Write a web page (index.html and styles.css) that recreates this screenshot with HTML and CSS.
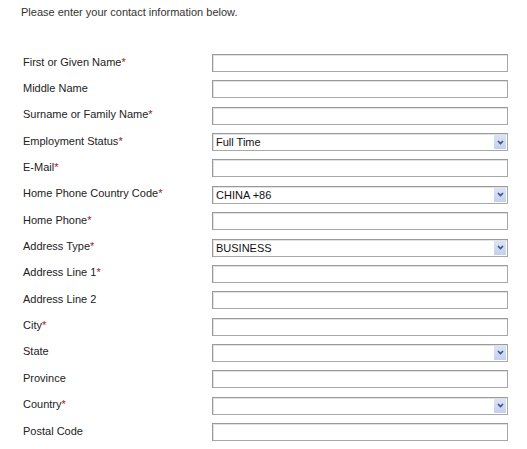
FILE: index.html
```html
<!DOCTYPE html>
<html>
<head>
<meta charset="utf-8">
<link rel="stylesheet" href="styles.css">
</head>
<body>
<div class="page">
  <p class="intro">Please enter your contact information below.</p>
  <div class="form">
    <div class="label">First or Given Name<span class="req">*</span></div>
    <div class="field"><div class="input"></div></div>
    <div class="label">Middle Name</div>
    <div class="field"><div class="input"></div></div>
    <div class="label">Surname or Family Name<span class="req">*</span></div>
    <div class="field"><div class="input"></div></div>
    <div class="label">Employment Status<span class="req">*</span></div>
    <div class="field"><div class="input select"><span class="value">Full Time</span><span class="btn"><svg width="7" height="5" viewBox="0 0 7 5"><path d="M1 1 L3.5 3.5 L6 1" fill="none" stroke="#3a4f86" stroke-width="1.6"/></svg></span></div></div>
    <div class="label">E-Mail<span class="req">*</span></div>
    <div class="field"><div class="input"></div></div>
    <div class="label">Home Phone Country Code<span class="req">*</span></div>
    <div class="field"><div class="input select"><span class="value">CHINA +86</span><span class="btn"><svg width="7" height="5" viewBox="0 0 7 5"><path d="M1 1 L3.5 3.5 L6 1" fill="none" stroke="#3a4f86" stroke-width="1.6"/></svg></span></div></div>
    <div class="label">Home Phone<span class="req">*</span></div>
    <div class="field"><div class="input"></div></div>
    <div class="label">Address Type<span class="req">*</span></div>
    <div class="field"><div class="input select"><span class="value">BUSINESS</span><span class="btn"><svg width="7" height="5" viewBox="0 0 7 5"><path d="M1 1 L3.5 3.5 L6 1" fill="none" stroke="#3a4f86" stroke-width="1.6"/></svg></span></div></div>
    <div class="label">Address Line 1<span class="req">*</span></div>
    <div class="field"><div class="input"></div></div>
    <div class="label">Address Line 2</div>
    <div class="field"><div class="input"></div></div>
    <div class="label">City<span class="req">*</span></div>
    <div class="field"><div class="input"></div></div>
    <div class="label">State</div>
    <div class="field"><div class="input select"><span class="value"></span><span class="btn"><svg width="7" height="5" viewBox="0 0 7 5"><path d="M1 1 L3.5 3.5 L6 1" fill="none" stroke="#3a4f86" stroke-width="1.6"/></svg></span></div></div>
    <div class="label">Province</div>
    <div class="field"><div class="input"></div></div>
    <div class="label">Country<span class="req">*</span></div>
    <div class="field"><div class="input select"><span class="value"></span><span class="btn"><svg width="7" height="5" viewBox="0 0 7 5"><path d="M1 1 L3.5 3.5 L6 1" fill="none" stroke="#3a4f86" stroke-width="1.6"/></svg></span></div></div>
    <div class="label">Postal Code</div>
    <div class="field"><div class="input"></div></div>
  </div>
</div>
</body>
</html>
```
FILE: styles.css
```css
html, body {
  margin: 0;
  padding: 0;
  background: #ffffff;
}
.page {
  font-family: "Liberation Sans", Arial, sans-serif;
  font-size: 11px;
  color: #222;
  padding: 5px 0 0 21px;
}
.intro {
  margin: 0;
  line-height: 14px;
  color: #333;
}
.form {
  margin-top: 35px;
  margin-left: 2px;
  display: grid;
  grid-template-columns: 189px 296px;
  grid-auto-rows: 18px;
  row-gap: 8.36px;
}
.label {
  display: flex;
  align-items: center;
  margin-top: -3px;
  white-space: nowrap;
}
.req {
  color: #a01818;
}
.field {
  display: flex;
}
.input {
  box-sizing: border-box;
  width: 296px;
  height: 18px;
  border: 1px solid #a8a8a8;
  border-top-color: #9a9a9a;
  border-left-color: #9a9a9a;
  box-shadow: inset 1px 1px 0 #e2e2e2;
  background: #fff;
  display: flex;
  align-items: center;
}
.select .value {
  flex: 1;
  padding-left: 3px;
  color: #111;
}
.btn {
  width: 12px;
  height: 14px;
  margin-right: 1px;
  background: linear-gradient(#dbe3f6, #c4d0ee);
  border: 0;
  display: flex;
  align-items: center;
  justify-content: center;
}
```
